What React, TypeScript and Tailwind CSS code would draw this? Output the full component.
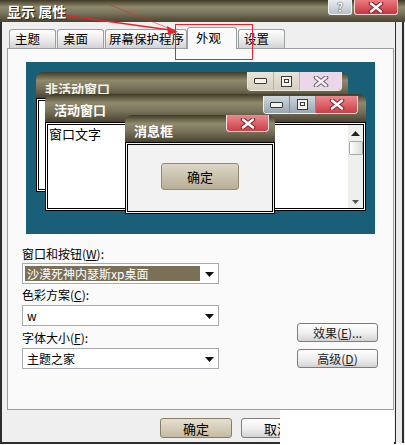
import React from 'react'

const cjk = "font-['Noto_Sans_CJK_SC','Noto_Sans',sans-serif]"
const caption = 'bg-[linear-gradient(to_bottom,#3f3a26_0%,#8f8a6c_32%,#77715a_62%,#4a4430_100%)]'

function CloseGlyph({ fill, edge }: { fill: string; edge: string }) {
  return (
    <svg width="16" height="11" viewBox="0 0 16 11">
      <path d="M3 1.5 L13 9.5 M13 1.5 L3 9.5" stroke={edge} strokeWidth="4.6" strokeLinecap="round" />
      <path d="M3 1.5 L13 9.5 M13 1.5 L3 9.5" stroke={fill} strokeWidth="2.4" strokeLinecap="round" />
    </svg>
  )
}

function MinGlyph() {
  return <span className="mt-[6px] block h-[6px] w-[13px] rounded-[1px] border border-[#3a3a3a] bg-[#f4f2ea]" />
}

function MaxGlyph() {
  return (
    <span className="flex h-[11px] w-[11px] justify-center border border-[#3a3a3a] bg-[#f4f2ea] pt-[2px]">
      <span className="block h-[4px] w-[5px] border border-[#3a3a3a]" />
    </span>
  )
}

function Arrow() {
  return (
    <svg width="9" height="5" viewBox="0 0 9 5">
      <path d="M0 0 H9 L4.5 5 Z" fill="#111" />
    </svg>
  )
}

function Combo({ text, selected }: { text: string; selected?: boolean }) {
  return (
    <div className="flex h-[21px] w-[197px] items-center border border-[#a7abb0] bg-white pl-[2px]">
      <div
        className={`flex h-[15px] w-[175px] items-center px-[2px] text-[12px] leading-none ${
          selected ? 'bg-[#7a7058] text-white' : 'text-black'
        }`}
      >
        {text}
      </div>
      <div className="flex flex-1 justify-center pt-[1px]">
        <Arrow />
      </div>
    </div>
  )
}

function SideButton({ children }: { children: React.ReactNode }) {
  return (
    <div className="flex h-[19px] w-[81px] items-center justify-center rounded-[3px] border border-[#7d7d7d] bg-[linear-gradient(to_bottom,#ffffff,#ececec_60%,#d3d3d3)] text-[12px] leading-none text-[#222]">
      {children}
    </div>
  )
}

const tabBase =
  'flex items-center border border-b-0 border-[#9aa1a3] rounded-t-[3px] text-[12.5px] leading-none'
const tabIdle = `${tabBase} h-[19px] bg-[linear-gradient(to_bottom,#ffffff,#e6e6e6_65%,#d2d2d2)] pl-[5px]`

export default function App() {
  return (
    <div className={`relative h-[445px] w-[405px] overflow-hidden bg-white text-black ${cjk}`}>
      {/* caption bar */}
      <div className={`relative flex h-[22px] items-center pl-[7px] ${caption}`}>
        <span className="text-[14px] font-bold leading-none text-white [text-shadow:1px_1px_0_#2a2616]">
          显示 属性
        </span>
        <div className="absolute right-[7px] top-0 flex h-[15px] gap-[2px]">
          <div className="flex w-[24px] items-center justify-center rounded-b-[3px] border border-t-0 border-[#f2f2f2] bg-[linear-gradient(to_bottom,#e9edf1,#b7c0c9)] text-[12px] font-bold leading-none text-white [text-shadow:0_0_1px_#333,0_0_1px_#333]">
            ?
          </div>
          <div className="flex w-[44px] items-center justify-center rounded-b-[3px] border border-t-0 border-[#f2d6d6] bg-[linear-gradient(to_bottom,#ea7b82,#c9343e)]">
            <CloseGlyph fill="#ffffff" edge="#8c2128" />
          </div>
        </div>
      </div>

      <div className="flex">
        <div className="flex h-[422px] w-[396px] flex-col border-b-2 border-l-2 border-r border-[#2e2e2e] bg-[#efefef] pl-[5px] pt-[5px]">
          {/* tabs */}
          <div className="flex h-[21px] items-end">
            <div className={`${tabIdle} ml-[2px] w-[47px]`}>主题</div>
            <div className={`${tabIdle} ml-[1px] w-[47px]`}>桌面</div>
            <div className={`${tabIdle} ml-[1px] w-[82px] !pl-[3px]`}>屏幕保护程序</div>
            <div className={`${tabBase} relative z-10 -mb-px h-[22px] w-[50px] bg-[#fafafa] pl-[8px]`}>外观</div>
            <div className={`${tabIdle} ml-[1px] w-[47px]`}>设置</div>
          </div>

          {/* appearance page */}
          <div className="flex h-[362px] w-[387px] flex-col border border-[#9aa1a3] bg-[#fafafa]">
            <div className="relative ml-[18px] mt-[13px] h-[172px] w-[349px] bg-[#1a5f78]">
              {/* inactive window */}
              <div className="absolute left-[10px] top-[10px] flex h-[120px] w-[312px] flex-col">
                <div className={`relative flex h-[26px] items-center rounded-t-[7px] pl-[9px] pt-[6px] ${caption}`}>
                  <span className="text-[13px] font-bold leading-none text-[#f3f1e8]">非活动窗口</span>
                  <div className="absolute right-[6px] top-0 flex h-[19px] overflow-hidden rounded-b-[4px] border border-t-0 border-[#efeadc]">
                    <div className="flex w-[26px] justify-center border-r border-[#b9b4a4] bg-[linear-gradient(to_bottom,#e9e5d8,#d4cfbf)]">
                      <MinGlyph />
                    </div>
                    <div className="flex w-[26px] items-center justify-center border-r border-[#b9b4a4] bg-[linear-gradient(to_bottom,#e9e5d8,#d4cfbf)]">
                      <MaxGlyph />
                    </div>
                    <div className="flex w-[41px] items-center justify-center bg-[#ead8ea]">
                      <CloseGlyph fill="#f6f0f6" edge="#6e6a70" />
                    </div>
                  </div>
                </div>
                <div className="flex-1 border-[3px] border-double border-black bg-white" />
              </div>

              {/* active window */}
              <div className="absolute left-[19px] top-[32px] flex h-[117px] w-[321px] flex-col">
                <div className={`relative flex h-[28px] items-center rounded-t-[7px] pl-[9px] pt-[2px] ${caption}`}>
                  <span className="text-[13px] font-bold leading-none text-white">活动窗口</span>
                  <div className="absolute right-[8px] top-[2px] flex h-[18px] overflow-hidden rounded-b-[4px] border border-t-0 border-[#eeeeee]">
                    <div className="flex w-[26px] justify-center border-r border-[#7f8a94] bg-[linear-gradient(to_bottom,#cfd8de,#98a6b2)]">
                      <MinGlyph />
                    </div>
                    <div className="flex w-[26px] items-center justify-center border-r border-[#7f8a94] bg-[linear-gradient(to_bottom,#cfd8de,#98a6b2)]">
                      <MaxGlyph />
                    </div>
                    <div className="flex w-[41px] items-center justify-center bg-[linear-gradient(to_bottom,#ec8a90,#cc3d47)]">
                      <CloseGlyph fill="#ffffff" edge="#8a2a30" />
                    </div>
                  </div>
                </div>
                <div className="flex flex-1 border-[3px] border-double border-black bg-white">
                  <div className="flex-1 pl-[1px] pt-[2px] text-[13px] leading-none">窗口文字</div>
                  <div className="flex w-[15px] flex-col items-center bg-[#efefec]">
                    <svg width="9" height="5" viewBox="0 0 9 5" className="mt-[6px]">
                      <path d="M0 5 H9 L4.5 0 Z" fill="#222" />
                    </svg>
                    <div className="mt-[5px] h-[14px] w-[14px] rounded-[2px] border border-[#a8a8a2] bg-[linear-gradient(to_right,#ffffff,#dcdcd8)]" />
                    <div className="flex-1" />
                    <svg width="7" height="4" viewBox="0 0 7 4" className="mb-[4px]">
                      <path d="M0 0 H7 L3.5 4 Z" fill="#555" />
                    </svg>
                  </div>
                </div>
              </div>

              {/* message box */}
              <div className="absolute left-[99px] top-[53px] flex h-[99px] w-[150px] flex-col">
                <div className={`relative flex h-[27px] items-center rounded-t-[7px] pl-[9px] pt-[3px] ${caption}`}>
                  <span className="text-[13px] font-bold leading-none text-white">消息框</span>
                  <div className="absolute right-[6px] top-0 flex h-[17px] w-[43px] items-center justify-center rounded-b-[4px] border border-t-0 border-[#f0e0e0] bg-[linear-gradient(to_bottom,#ec8a90,#cc3d47)]">
                    <CloseGlyph fill="#ffffff" edge="#8a2a30" />
                  </div>
                </div>
                <div className="flex-1 border-[3px] border-double border-black bg-[#f2f2f2] pl-[33px] pt-[18px]">
                  <div className="flex h-[27px] w-[78px] items-center justify-center rounded-[3px] border border-[#948b75] bg-[linear-gradient(to_bottom,#ddd6c6,#c9c1ad_55%,#b8af98)] text-[13px] leading-none">
                    确定
                  </div>
                </div>
              </div>
            </div>

            {/* selectors */}
            <div className="mt-[12px] flex">
              <div className="ml-[14px] flex w-[197px] flex-col">
                <div className="h-[16px] text-[12px] leading-[16px]">
                  窗口和按钮(<span className="underline">W</span>):
                </div>
                <div className="mt-[1px]">
                  <Combo text="沙漠死神内瑟斯xp桌面" selected />
                </div>
                <div className="mt-[3px] h-[16px] text-[12px] leading-[16px]">
                  色彩方案(<span className="underline">C</span>):
                </div>
                <div className="mt-[2px]">
                  <Combo text="w" />
                </div>
                <div className="mt-[4px] h-[16px] text-[12px] leading-[16px]">
                  字体大小(<span className="underline">F</span>):
                </div>
                <div className="mt-[2px]">
                  <Combo text="主题之家" />
                </div>
              </div>
              <div className="ml-[78px] flex flex-col">
                <div className="mt-[77px]">
                  <SideButton>
                    效果(<span className="underline">E</span>)...
                  </SideButton>
                </div>
                <div className="mt-[7px]">
                  <SideButton>
                    高级(<span className="underline">D</span>)
                  </SideButton>
                </div>
              </div>
            </div>
          </div>

          {/* dialog buttons */}
          <div className="mt-[8px] flex">
            <div className="ml-[153px] flex h-[20px] w-[72px] items-center justify-center rounded-[3px] border border-[#857d68] bg-[linear-gradient(to_bottom,#e6dfcf,#d3cab5_60%,#c5bba3)] text-[13px] leading-none">
              确定
            </div>
            <div className="ml-[9px] flex h-[20px] w-[72px] items-center justify-center rounded-[3px] border border-[#7d7d7d] bg-[linear-gradient(to_bottom,#ffffff,#ececec_60%,#d3d3d3)] text-[13px] leading-none">
              取消
            </div>
          </div>
        </div>

        {/* outer frame edge */}
        <div className="flex h-[421px] w-[9px] bg-[#ebebeb]">
          <div className="ml-[6px] w-[2px] bg-[#2e2e2e]" />
        </div>
      </div>

      {/* white patch over the lower right corner */}
      <div className="absolute left-[280px] top-[410px] h-[35px] w-[114px] bg-white" />

      {/* red callout: arrow from the caption to the boxed tab */}
      <svg className="pointer-events-none absolute left-0 top-0" width="405" height="445" viewBox="0 0 405 445">
        <path d="M62 15 L170 30" stroke="#e3242e" strokeWidth="1.4" fill="none" />
        <path d="M110 5 L168 28" stroke="#e3242e" strokeWidth="0.8" fill="none" opacity="0.7" />
        <path d="M178 32 L167 26 L168 35 Z" fill="#e3242e" />
        <rect x="175.5" y="24.5" width="77" height="35" stroke="#e3242e" strokeWidth="1" fill="none" />
      </svg>
    </div>
  )
}
